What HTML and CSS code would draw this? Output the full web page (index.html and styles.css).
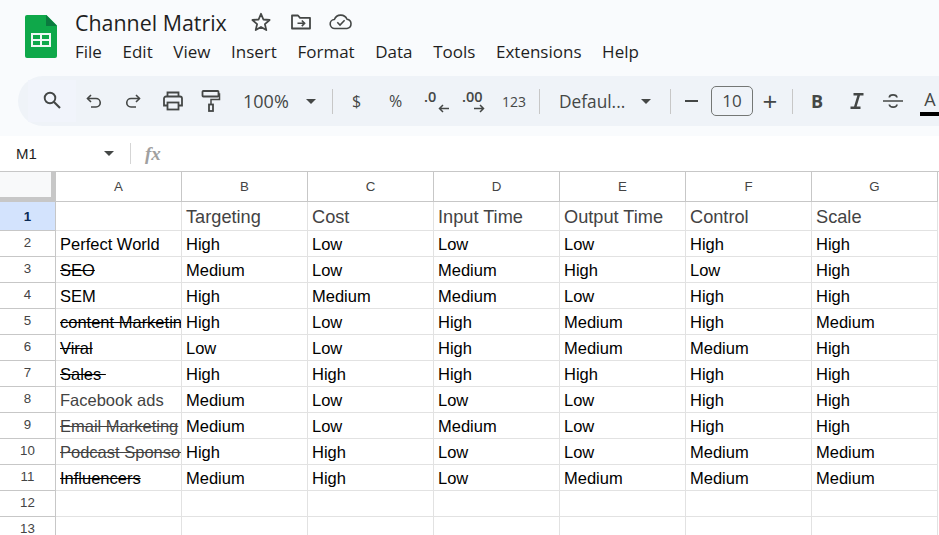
FILE: index.html
```html
<!DOCTYPE html>
<html lang="en">
<head>
<meta charset="utf-8">
<title>Channel Matrix</title>
<link rel="stylesheet" href="styles.css">
</head>
<body>
<header class="top">
  <svg class="logo" width="32" height="43" viewBox="0 0 32 43"><path d="M2 0h19.500L32 10.500V41a2 2 0 0 1-2 2H2a2 2 0 0 1-2-2V2a2 2 0 0 1 2-2z" fill="#0fa84a"/><path d="M21 0l11 11H21z" fill="#0b7a3f"/><path d="M6 18h20v14H6zM8 20v4h7v-4zM17 20v4h7v-4zM8 26v4h7v-4zM17 26v4h7v-4z" fill="#f1f8f4" fill-rule="evenodd"/></svg>
  <div class="titles">
    <div class="title-row">
      <span class="doc-title">Channel Matrix</span>
      <svg class="ic star" width="22" height="22" viewBox="0 0 22 22"><path d="M11 2.800l2.400 5.700 6.200.5-4.700 4.100 1.400 6-5.300-3.200-5.300 3.200 1.400-6L2.400 9l6.200-.5z" fill="none" stroke="#444746" stroke-width="1.800" stroke-linejoin="round"/></svg>
      <svg class="ic move" width="22" height="18" viewBox="0 0 22 18"><path d="M2 15.500V2.500h6l2 2.300h10v10.700z" fill="none" stroke="#444746" stroke-width="1.800" stroke-linejoin="round"/><path d="M7.500 10.300h7M11.800 7.500l2.800 2.800-2.800 2.800" fill="none" stroke="#444746" stroke-width="1.600"/></svg>
      <svg class="ic cloud" width="24" height="18" viewBox="0 0 24 18"><path d="M6 15.500a4.500 4.500 0 0 1-.6-9A6.800 6.800 0 0 1 18 6.200a4.700 4.700 0 0 1 0 9.300z" fill="none" stroke="#444746" stroke-width="1.600" stroke-linejoin="round"/><path d="M8.300 9.300l2.700 2.700 4.600-4.700" fill="none" stroke="#444746" stroke-width="1.600"/></svg>
    </div>
    <nav class="menu">
      <span>File</span><span>Edit</span><span>View</span><span>Insert</span><span>Format</span><span>Data</span><span>Tools</span><span>Extensions</span><span>Help</span>
    </nav>
  </div>
</header>

<div class="toolbar-wrap">
  <div class="toolbar">
    <span class="search-box">
      <svg width="20" height="20" viewBox="0 0 20 20"><circle cx="8" cy="8" r="5.300" fill="none" stroke="#444746" stroke-width="1.900"/><path d="M12 12l6 6" stroke="#444746" stroke-width="2.100"/></svg>
    </span>
    <svg class="t undo" width="18" height="18" viewBox="0 0 18 18"><path d="M6 3L2.500 6.500 6 10" fill="none" stroke="#444746" stroke-width="1.600"/><path d="M2.800 6.500h8.200a4 4 0 0 1 0 8.500H6" fill="none" stroke="#444746" stroke-width="1.600"/></svg>
    <svg class="t redo" width="18" height="18" viewBox="0 0 18 18"><path d="M12 3l3.500 3.500L12 10" fill="none" stroke="#444746" stroke-width="1.600"/><path d="M15.200 6.500H7a4 4 0 0 0 0 8.500h5" fill="none" stroke="#444746" stroke-width="1.600"/></svg>
    <svg class="t print" width="22" height="20" viewBox="0 0 22 20"><path d="M5.500 5.500V1.500h11v4M5.500 14.500H2V7.500a2 2 0 0 1 2-2h14a2 2 0 0 1 2 2v7h-3.500" fill="none" stroke="#444746" stroke-width="1.800"/><rect x="5.500" y="11.500" width="11" height="7" fill="none" stroke="#444746" stroke-width="1.800"/></svg>
    <svg class="t paint" width="20" height="22" viewBox="0 0 20 22"><rect x="1.500" y="1" width="16" height="5.500" rx=".8" fill="none" stroke="#444746" stroke-width="1.800"/><path d="M17.500 4h1v5.500H10v5" fill="none" stroke="#444746" stroke-width="1.500"/><rect x="8" y="14.500" width="4" height="6.500" fill="none" stroke="#444746" stroke-width="1.800"/></svg>
    <span class="tx zoom-val">100%</span>
    <span class="caret zoom-caret"></span>
    <span class="sep sep-a"></span>
    <span class="tx small dollar">$</span>
    <span class="tx small pct">%</span>
    <span class="dec dec-less">.0<svg width="11" height="9" viewBox="0 0 11 9"><path d="M11 4.500H2M5 1L1.500 4.500 5 8" fill="none" stroke="#444746" stroke-width="1.500"/></svg></span>
    <span class="dec dec-more">.00<svg width="11" height="9" viewBox="0 0 11 9"><path d="M0 4.500h9M6 1l3.500 3.500L6 8" fill="none" stroke="#444746" stroke-width="1.500"/></svg></span>
    <span class="tx num">123</span>
    <span class="sep sep-b"></span>
    <span class="tx font-name">Defaul...</span>
    <span class="caret font-caret"></span>
    <span class="sep sep-c"></span>
    <span class="minus"></span>
    <span class="size">10</span>
    <span class="plus">+</span>
    <span class="sep sep-d"></span>
    <span class="bold">B</span>
    <svg class="t ital" width="14" height="16" viewBox="0 0 14 16"><path d="M3.500 1.300h10M.5 14.700h10M9 1.300L5 14.700" fill="none" stroke="#444746" stroke-width="2.500"/></svg>
    <svg class="t strike-ic" width="22" height="20" viewBox="0 0 22 20"><path d="M1 10h20" stroke="#444746" stroke-width="1.500"/><path d="M15 6.500C14.500 3 7.500 3 7.300 6.500M7.300 13.500c.5 3.500 7.300 3.500 7.700 0" fill="none" stroke="#444746" stroke-width="1.700"/></svg>
    <span class="text-color">A</span>
  </div>
</div>

<div class="formula">
  <span class="name-box">M1</span>
  <span class="caret name-caret"></span>
  <span class="sep fx-sep"></span>
  <span class="fx">fx</span>
</div>

<main class="sheet">
  <div class="corner"></div>
  <div class="col">A</div><div class="col">B</div><div class="col">C</div><div class="col">D</div><div class="col">E</div><div class="col">F</div><div class="col">G</div>

  <div class="rh rh-active">1</div>
  <div class="c"></div><div class="c head">Targeting</div><div class="c head">Cost</div><div class="c head">Input Time</div><div class="c head">Output Time</div><div class="c head">Control</div><div class="c head">Scale</div>

  <div class="rh">2</div>
  <div class="c">Perfect World</div><div class="c">High</div><div class="c">Low</div><div class="c">Low</div><div class="c">Low</div><div class="c">High</div><div class="c">High</div>

  <div class="rh">3</div>
  <div class="c struck">SEO</div><div class="c">Medium</div><div class="c">Low</div><div class="c">Medium</div><div class="c">High</div><div class="c">Low</div><div class="c">High</div>

  <div class="rh">4</div>
  <div class="c">SEM</div><div class="c">High</div><div class="c">Medium</div><div class="c">Medium</div><div class="c">Low</div><div class="c">High</div><div class="c">High</div>

  <div class="rh">5</div>
  <div class="c struck">content Marketing</div><div class="c">High</div><div class="c">Low</div><div class="c">High</div><div class="c">Medium</div><div class="c">High</div><div class="c">Medium</div>

  <div class="rh">6</div>
  <div class="c struck">Viral</div><div class="c">Low</div><div class="c">Low</div><div class="c">High</div><div class="c">Medium</div><div class="c">Medium</div><div class="c">High</div>

  <div class="rh">7</div>
  <div class="c struck">Sales </div><div class="c">High</div><div class="c">High</div><div class="c">High</div><div class="c">High</div><div class="c">High</div><div class="c">High</div>

  <div class="rh">8</div>
  <div class="c grey">Facebook ads</div><div class="c">Medium</div><div class="c">Low</div><div class="c">Low</div><div class="c">Low</div><div class="c">High</div><div class="c">High</div>

  <div class="rh">9</div>
  <div class="c grey struck">Email Marketing</div><div class="c">Medium</div><div class="c">Low</div><div class="c">Medium</div><div class="c">Low</div><div class="c">High</div><div class="c">High</div>

  <div class="rh">10</div>
  <div class="c grey struck">Podcast Sponsorships</div><div class="c">High</div><div class="c">High</div><div class="c">Low</div><div class="c">Low</div><div class="c">Medium</div><div class="c">Medium</div>

  <div class="rh">11</div>
  <div class="c struck">Influencers</div><div class="c">Medium</div><div class="c">High</div><div class="c">Low</div><div class="c">Medium</div><div class="c">Medium</div><div class="c">Medium</div>

  <div class="rh">12</div>
  <div class="c"></div><div class="c"></div><div class="c"></div><div class="c"></div><div class="c"></div><div class="c"></div><div class="c"></div>

  <div class="rh">13</div>
  <div class="c"></div><div class="c"></div><div class="c"></div><div class="c"></div><div class="c"></div><div class="c"></div><div class="c"></div>
</main>
</body>
</html>
```
FILE: styles.css
```css
* { box-sizing: border-box; }
html, body { margin: 0; height: 100%; }
body {
  width: 939px;
  height: 535px;
  overflow: hidden;
  background: #f9fbfd;
  font-family: "Open Sans", Roboto, sans-serif;
  color: #1f1f1f;
}
svg { display: block; flex: none; }

.top { display: flex; height: 76px; padding: 15px 0 0 25px; }
.logo { width: 32px; height: 43px; }
.titles { margin-left: 18px; margin-top: -7px; }
.title-row { display: flex; align-items: center; height: 28px; }
.doc-title { font: 21.400px "Open Sans", sans-serif; color: #1f1f1f; width: 175px; white-space: nowrap; }
.move { margin-left: 18px; }
.cloud { margin-left: 17px; }
.menu { display: flex; gap: 20.600px; margin-top: 4px; font: 17px/24px "Open Sans", sans-serif; color: #1f1f1f; }

.toolbar-wrap { height: 60px; padding-left: 18px; }
.toolbar {
  display: flex;
  align-items: center;
  width: 960px;
  height: 50px;
  border-radius: 25px;
  background: #eff3f8;
  color: #444746;
  white-space: nowrap;
}
.search-box {
  display: flex; align-items: center; justify-content: center;
  width: 48px; height: 42px; margin-left: 10px;
  background: #f1f4fb;
}
.search-box svg { margin-top: -2px; }
.undo { margin-left: 9px; }
.redo { margin-left: 21px; }
.print { margin-left: 20px; }
.paint { margin-left: 17px; }
.tx { font-size: 17px; color: #444746; }
.zoom-val { margin-left: 22px; width: 63px; font-size: 18px; }
.caret { width: 0; height: 0; border-left: 5.500px solid transparent; border-right: 5.500px solid transparent; border-top: 5.500px solid #444746; flex: none; }
.sep { width: 1px; height: 25px; background: #c7c7c7; flex: none; }
.sep-a { margin-left: 16px; }
.small { font-size: 16px; }
.dollar { margin-left: 19px; width: 11px; }
.pct { margin-left: 26px; width: 15px; }
.dec { position: relative; font: 600 14.500px/22px "Open Sans", sans-serif; display: block; height: 30px; color: #444746; }
.dec svg { position: absolute; top: 18px; right: -5px; }
.dec-less { margin-left: 20px; width: 20px; }
.dec-more { margin-left: 18px; width: 22px; }
.dec-more svg { right: -1px; }
.num { font-size: 14px; margin-left: 18px; width: 25px; }
.sep-b { margin-left: 12px; }
.font-name { margin-left: 19px; width: 82px; font-size: 17.300px; }
.sep-c { margin-left: 19px; }
.minus { width: 13px; height: 2px; background: #444746; margin-left: 14px; flex: none; }
.size {
  width: 42px; height: 30px; margin-left: 13px;
  border: 1px solid #747775; border-radius: 5px;
  font-size: 17px; line-height: 28px; text-align: center; color: #444746;
  flex: none;
}
.plus { margin-left: 9px; width: 16px; font: 26px/26px "Open Sans", sans-serif; text-align: center; color: #444746; }
.sep-d { margin-left: 14px; }
.bold { margin-left: 18px; width: 14px; font: 700 18px "Open Sans", sans-serif; color: #444746; }
.ital { margin-left: 25px; }
.strike-ic { margin-left: 18px; }
.text-color {
  margin-left: 16px; width: 20px; height: 29px;
  font: 18px/24px "Open Sans", sans-serif; text-align: center; color: #444746;
  border-bottom: 4px solid #000;
}

.formula {
  display: flex; align-items: center;
  height: 35px;
  background: #fff;
  font-family: "Liberation Sans", sans-serif;
}
.name-box { margin-left: 16px; width: 88px; font-size: 15px; color: #1f1f1f; }
.fx-sep { margin-left: 16px; height: 21px; background: #d5d5d5; }
.fx { margin-left: 14px; font: italic 700 19px "Liberation Serif", serif; color: #a0a0a0; }

.sheet {
  display: grid;
  grid-template-columns: 56px repeat(7, 126px);
  grid-template-rows: 30px 29px repeat(12, 26px);
  background: #fff;
  font-family: "Liberation Sans", Arial, sans-serif;
  height: 364px;
  overflow: hidden;
  border-top: 1px solid #c7c7c7;
}
.corner { background: #f8f9fa; border-right: 5px solid #c7c7c7; border-bottom: 5px solid #c7c7c7; }
.col {
  display: flex; align-items: center; justify-content: center;
  font-size: 13.300px; color: #444;
  border-right: 1px solid #c7c7c7; border-bottom: 1px solid #c7c7c7;
}
.rh {
  display: flex; align-items: center; justify-content: center;
  padding-bottom: 3px;
  font-size: 13.300px; color: #444;
  border-right: 1px solid #c7c7c7; border-bottom: 1px solid #c7c7c7;
}
.rh-active { background: #d3e3fd; font-weight: 700; color: #0b2a55; padding-bottom: 0; }
.c {
  overflow: hidden;
  white-space: pre;
  padding: 1px 0 0 4px;
  font-size: 16.500px;
  line-height: 25px;
  color: #000;
  border-right: 1px solid #e2e2e2;
  border-bottom: 1px solid #e2e2e2;
}
.head { font-size: 18.200px; line-height: 29px; color: #434343; }
.struck { text-decoration: line-through; }
.grey { color: #434343; }
```
